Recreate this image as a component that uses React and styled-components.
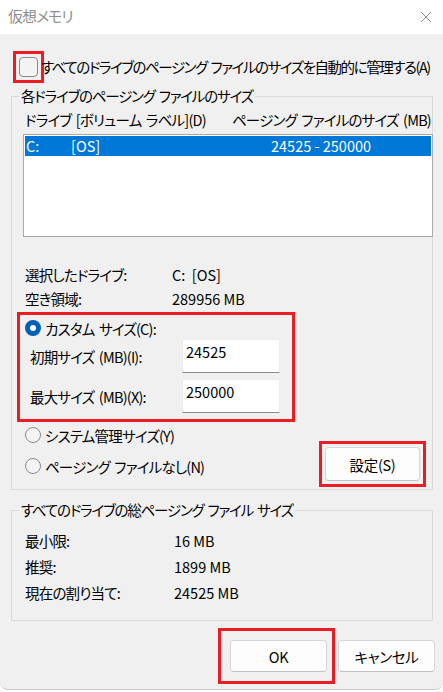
import React from 'react';
import styled, { createGlobalStyle } from 'styled-components';

const GlobalStyle = createGlobalStyle`
  html, body {
    margin: 0;
    padding: 0;
    background: #ffffff;
  }
  body {
    font-family: "Noto Sans CJK JP", "Noto Sans", sans-serif;
    font-size: 14.5px;
    font-feature-settings: "palt";
    letter-spacing: -0.8px;
    word-spacing: 2px;
    color: #000;
  }
`;

const Window = styled.div`
  width: 443px;
  height: 690px;
  background: #f0f0f0;
  border-bottom: 1px solid #c9c9c9;
  border-radius: 0 0 8px 8px;
  box-sizing: border-box;
  overflow: hidden;
`;

const TitleBar = styled.div`
  height: 34px;
  background: #ffffff;
  display: flex;
  align-items: center;
  justify-content: space-between;
  padding: 0 11px 0 8px;
`;

const Title = styled.div`
  font-size: 15px;
  color: #8f8f8f;
  line-height: 20px;
  margin-top: -2px;
  letter-spacing: -1px;
`;

const Body = styled.div`
  padding: 0 10px 0 11px;
`;

// 赤い強調枠
const Highlight = styled.div`
  border: 3px solid #ec1c24;
  box-sizing: border-box;
  padding: ${(props) => props.pad || '0'};
  width: ${(props) => props.w || 'auto'};
  margin: ${(props) => props.m || '0'};
  flex-shrink: 0;
`;

const CheckRow = styled.div`
  display: flex;
  align-items: center;
  margin-top: 17px;
  line-height: 20px;
`;

const CheckBox = styled.span`
  display: block;
  width: 17px;
  height: 18px;
  border: 1px solid #8a8a8a;
  border-radius: 4px;
  background: #f3f3f3;
`;

const CheckLabel = styled.span`
  margin-left: -3px;
  white-space: nowrap;
  letter-spacing: -1.45px;
`;

const Group = styled.div`
  border: 1px solid #dadada;
  margin-top: ${(props) => props.top || '0'};
  padding: ${(props) => props.pad || '0'};
`;

const Legend = styled.div`
  width: fit-content;
  margin: -11px 0 0 7px;
  padding: 0 2px;
  line-height: 20px;
  background: #f0f0f0;
  white-space: nowrap;
  letter-spacing: -1.2px;
`;

const ColumnHeader = styled.div`
  display: grid;
  grid-template-columns: 207px 1fr;
  padding-left: 13px;
  margin-top: 4px;
  line-height: 20px;
  white-space: nowrap;
`;

const ListBox = styled.div`
  margin: 4px -1px 0 11px;
  height: 103px;
  box-sizing: border-box;
  border: 1px solid #a9a9a9;
  background: #ffffff;
  padding: 1px;
`;

const ListRow = styled.div`
  display: grid;
  grid-template-columns: 45px 200px 1fr;
  height: 20px;
  line-height: 20px;
  padding-left: 1px;
  letter-spacing: 0;
  word-spacing: 0;
  background: ${(props) => (props.selected ? '#0078d7' : 'transparent')};
  color: ${(props) => (props.selected ? '#ffffff' : '#000')};
`;

const InfoRow = styled.div`
  display: grid;
  grid-template-columns: ${(props) => props.cols || '147px 1fr'};
  height: ${(props) => props.h || '24px'};
  align-items: center;
  padding-left: 13px;
  white-space: nowrap;
`;

const Value = styled.span`
  letter-spacing: 0;
  word-spacing: 0;
`;

const InfoBlock = styled.div`
  margin-top: ${(props) => props.top || '0'};
`;

const RadioRow = styled.label`
  display: flex;
  align-items: center;
  height: 20px;
  margin-top: ${(props) => props.top || '0'};
  margin-left: ${(props) => props.left || '0'};
  white-space: nowrap;
`;

const Radio = styled.span`
  display: block;
  width: 16px;
  height: 16px;
  box-sizing: border-box;
  border-radius: 50%;
  margin-right: 4px;
  border: ${(props) => (props.checked ? '5px solid #005fb8' : '1px solid #8a8a8a')};
  background: ${(props) => (props.checked ? '#ffffff' : '#f5f5f5')};
`;

const SizeRow = styled.div`
  display: grid;
  grid-template-columns: 152px 98px;
  align-items: center;
  margin: ${(props) => props.m || '0'};
  padding-left: 5px;
  white-space: nowrap;
`;

const TextInput = styled.div`
  height: 34px;
  box-sizing: border-box;
  background: #ffffff;
  border: 1px solid #ececec;
  border-bottom: 1px solid #8c8c8c;
  padding: 2px 0 0 3px;
  line-height: 20px;
  letter-spacing: 0;
`;

const OptionArea = styled.div`
  display: flex;
  justify-content: space-between;
  align-items: flex-start;
  padding-bottom: 2px;
`;

const RadioColumn = styled.div`
  padding-top: 3px;
`;

const Button = styled.button`
  display: block;
  width: ${(props) => props.w || '96px'};
  height: ${(props) => props.h || '33px'};
  padding: 0;
  font: inherit;
  letter-spacing: -0.3px;
  color: #000;
  background: #fdfdfd;
  border: 1px solid #d6d6d6;
  border-bottom-color: #c2c2c2;
  border-radius: 4px;
`;

const ButtonBar = styled.div`
  display: flex;
  justify-content: flex-end;
  align-items: center;
  gap: 3px;
  margin: 7px -2px 0 0;
`;

const CloseIcon = () => (
  <svg width="12" height="12" viewBox="0 0 12 12">
    <path d="M1 1 L11 11 M11 1 L1 11" stroke="#8a8a8a" strokeWidth="1" fill="none" />
  </svg>
);

const App = () => {
  return (
    <>
      <GlobalStyle />
      <Window>
        <TitleBar>
          <Title>仮想メモリ</Title>
          <CloseIcon />
        </TitleBar>

        <Body>
          <CheckRow>
            <Highlight pad="3px 3px 3px 3px" m="0 0 0 2px">
              <CheckBox />
            </Highlight>
            <CheckLabel>すべてのドライブのページング ファイルのサイズを自動的に管理する(A)</CheckLabel>
          </CheckRow>

          <Group top="13px">
            <Legend>各ドライブのページング ファイルのサイズ</Legend>
            <ColumnHeader>
              <span>ドライブ&nbsp;[ボリューム ラベル](D)</span>
              <span>ページング ファイルのサイズ (MB)</span>
            </ColumnHeader>
            <ListBox>
              <ListRow selected>
                <span>C:</span>
                <span>[OS]</span>
                <span>24525 - 250000</span>
              </ListRow>
            </ListBox>

            <InfoBlock top="25px">
              <InfoRow>
                <span>選択したドライブ:</span>
                <Value>C:&nbsp; [OS]</Value>
              </InfoRow>
              <InfoRow>
                <span>空き領域:</span>
                <Value>289956 MB</Value>
              </InfoRow>
            </InfoBlock>

            <Highlight w="278px" m="2px 0 0 5px" pad="3px 0 6px 5px">
              <RadioRow>
                <Radio checked />
                カスタム サイズ(C):
              </RadioRow>
              <SizeRow m="1px 0 0 0">
                <span>初期サイズ (MB)(I):</span>
                <TextInput>24525</TextInput>
              </SizeRow>
              <SizeRow m="6px 0 0 0">
                <span>最大サイズ (MB)(X):</span>
                <TextInput>250000</TextInput>
              </SizeRow>
            </Highlight>

            <OptionArea>
              <RadioColumn>
                <RadioRow left="13px">
                  <Radio />
                  システム管理サイズ(Y)
                </RadioRow>
                <RadioRow left="13px" top="11px">
                  <Radio />
                  ページング ファイルなし(N)
                </RadioRow>
              </RadioColumn>
              <Highlight w="107px" m="19px 6px 0 0" pad="3px">
                <Button w="95px" h="34px">設定(S)</Button>
              </Highlight>
            </OptionArea>
          </Group>

          <Group top="20px" pad="0 0 15px 0">
            <Legend>すべてのドライブの総ページング ファイル サイズ</Legend>
            <InfoBlock top="7px">
              <InfoRow cols="149px 1fr" h="26px">
                <span>最小限:</span>
                <Value>16 MB</Value>
              </InfoRow>
              <InfoRow cols="149px 1fr" h="26px">
                <span>推奨:</span>
                <Value>1899 MB</Value>
              </InfoRow>
              <InfoRow cols="149px 1fr" h="26px">
                <span>現在の割り当て:</span>
                <Value>24525 MB</Value>
              </InfoRow>
            </InfoBlock>
          </Group>

          <ButtonBar>
            <Highlight pad="9px 5px 9px 9px">
              <Button w="97px" h="32px">OK</Button>
            </Highlight>
            <Button w="97px" h="32px">キャンセル</Button>
          </ButtonBar>
        </Body>
      </Window>
    </>
  );
};

export default App;
